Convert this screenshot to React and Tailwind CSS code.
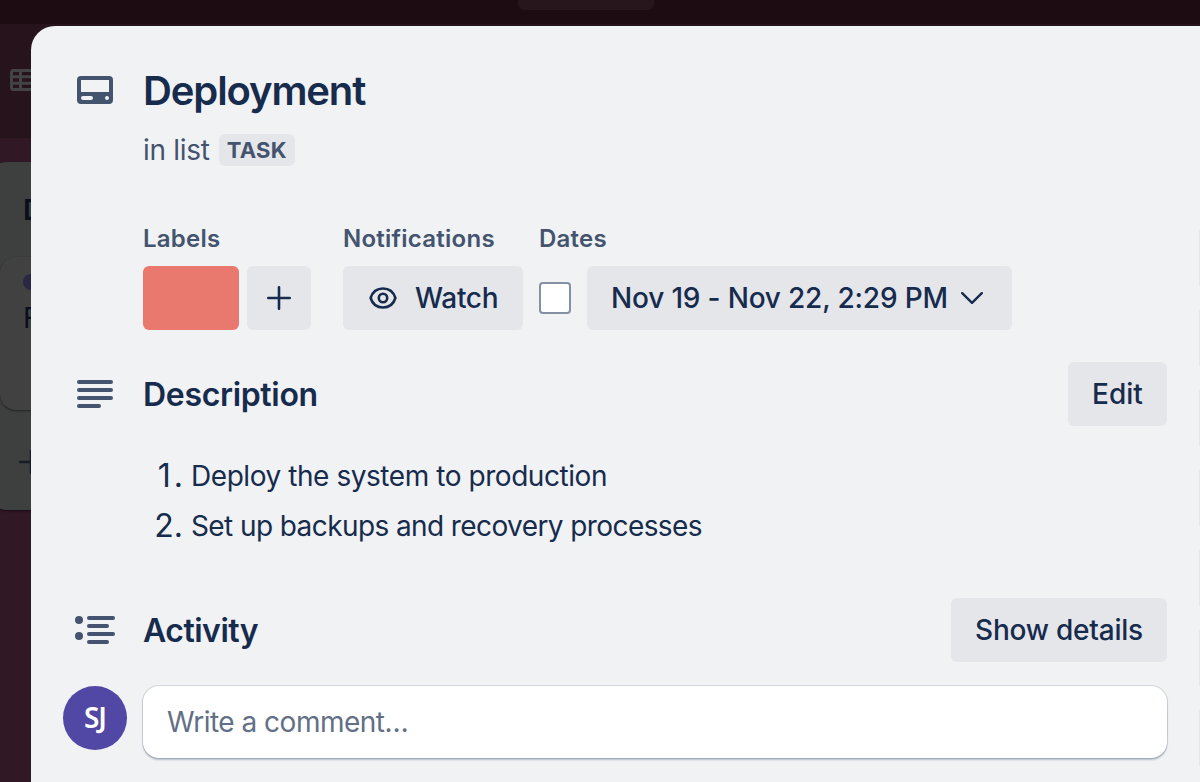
function CardIcon() {
  return (
    <svg className="-mt-[2px] h-[28px] w-[36px]" viewBox="0 0 36 28" fill="none">
      <path
        fillRule="evenodd"
        clipRule="evenodd"
        fill="#44546f"
        d="M4 0h28a4 4 0 0 1 4 4v20a4 4 0 0 1-4 4H4a4 4 0 0 1-4-4V4a4 4 0 0 1 4-4ZM4 4v12h28V4ZM6 20a2 2 0 0 0 0 4h8a2 2 0 0 0 0-4ZM30 20a2 2 0 1 0 0 4a2 2 0 1 0 0-4Z"
      />
    </svg>
  );
}

function DescriptionIcon() {
  return (
    <svg className="h-[28px] w-[36px]" viewBox="0 0 36 28" fill="#44546f">
      <rect x="0" y="0" width="36" height="4" rx="2" />
      <rect x="0" y="8" width="36" height="4" rx="2" />
      <rect x="0" y="16" width="36" height="4" rx="2" />
      <rect x="0" y="24" width="24" height="4" rx="2" />
    </svg>
  );
}

function ActivityIcon() {
  return (
    <svg className="h-[28px] w-[40px]" viewBox="0 0 40 28" fill="#44546f">
      <circle cx="4" cy="4" r="4" />
      <circle cx="4" cy="20" r="4" />
      <rect x="12" y="0" width="28" height="4" rx="2" />
      <rect x="12" y="8" width="22" height="4" rx="2" />
      <rect x="12" y="16" width="28" height="4" rx="2" />
      <rect x="12" y="24" width="22" height="4" rx="2" />
    </svg>
  );
}

function EyeIcon() {
  return (
    <svg className="h-[24px] w-[28px] shrink-0" viewBox="0 0 28 24" fill="none" stroke="#172b4d" strokeWidth="2.6">
      <path d="M1.6 12C3.4 6.200 8 2.500 14 2.500S24.600 6.200 26.400 12C24.600 17.800 20 21.500 14 21.500S3.400 17.800 1.600 12Z" strokeLinejoin="round" />
      <circle cx="14" cy="12" r="4.200" />
    </svg>
  );
}

function Button({ className = "", children }) {
  return (
    <button className={"flex h-16 shrink-0 items-center rounded-[6px] bg-[#e4e6ea] text-[28px] font-medium whitespace-nowrap " + className}>
      {children}
    </button>
  );
}

function FieldTitle({ children }) {
  return <h3 className="h-10 text-[24px] leading-[26px] font-semibold tracking-[0.25px] text-[#44546f]">{children}</h3>;
}

function Board() {
  return (
    <div className="flex h-[782px] w-full flex-col bg-[#301824]">
      <header className="flex h-6 shrink-0 items-start bg-[#1e0c13] pl-[518px]">
        <div className="h-[10px] w-[136px] rounded-b-[6px] bg-[#27171d]" />
      </header>
      <nav className="flex h-[114px] shrink-0 items-start bg-[#27131b] pt-[45px] pl-[10px]">
        <svg className="h-[22px] w-[34px]" viewBox="0 0 34 22" fill="none" stroke="#414345" strokeWidth="3">
          <rect x="1.500" y="1.500" width="31" height="19" rx="2" />
          <path d="M10.500 1v20M1 7.800h32M1 14.200h32" />
        </svg>
      </nav>
      <main className="pt-6">
        <section className="-ml-4 flex h-[348px] w-[316px] flex-col rounded-[24px] bg-[#3e403f] px-4 shadow-[0_1px_2px_#1a0c14]">
          <h2 className="flex h-[95px] items-center pl-[23px] text-[28px] font-semibold text-[#080f1b]">Done</h2>
          <article className="h-[153px] rounded-[16px] bg-[#414141] pt-[17px] shadow-[0_1px_2px_#222222]">
            <div className="ml-[23px] h-4 w-20 rounded-full bg-[#2a2742]" />
            <p className="pt-2 pl-[23px] text-[28px] leading-10 text-[#080f1b]">Finish</p>
          </article>
          <div className="flex grow items-center pt-1 pl-[19px]">
            <svg className="h-6 w-6" viewBox="0 0 24 24" stroke="#171d26" strokeWidth="2.500" strokeLinecap="round">
              <path d="M1 12h22M12 1v22" />
            </svg>
          </div>
        </section>
      </main>
    </div>
  );
}

const sideSlots = [0, 1, 2, 3, 4, 5, 6];

export default function App() {
  return (
    <div className="relative h-[782px] w-[1200px] overflow-hidden font-['Inter',sans-serif] text-[#172b4d]">
      <Board />
      <div className="absolute top-[26px] left-[31px] flex h-[756px] w-[1169px] overflow-hidden rounded-tl-[24px] bg-[#f0f2f4]">
        <div className="w-[1168px] shrink-0 pt-9 pr-8 pl-8">
          <div className="flex h-[58px] items-center">
            <div className="flex w-20 pl-[14px]"><CardIcon /></div>
            <h1 className="text-[40px] font-semibold tracking-[-0.028em]">Deployment</h1>
          </div>
          <div className="ml-20 flex h-[60px] items-center gap-[9px] text-[28px] text-[#44546f]">
            <span className="tracking-[-0.01em]">in list</span>
            <span className="flex h-8 w-[76px] items-center justify-center rounded-[6px] bg-[#e4e6ea] text-[22px] font-bold tracking-[0.2px]">TASK</span>
          </div>

          <div className="mt-[46px] ml-20 flex">
            <div className="mr-8">
              <FieldTitle>Labels</FieldTitle>
              <div className="flex gap-2">
                <div className="h-16 w-24 rounded-[6px] bg-[#e9796e]" />
                <Button className="w-16 justify-center">
                  <svg className="h-6 w-6" viewBox="0 0 24 24" stroke="#172b4d" strokeWidth="2.600" strokeLinecap="round">
                    <path d="M1.300 12h21.400M12 1.300v21.400" />
                  </svg>
                </Button>
              </div>
            </div>
            <div className="mr-4">
              <FieldTitle>Notifications</FieldTitle>
              <Button className="w-[180px] gap-[18px] pl-[26px]">
                <EyeIcon />
                <span className="tracking-[-0.3px]">Watch</span>
              </Button>
            </div>
            <div>
              <FieldTitle>Dates</FieldTitle>
              <div className="flex items-center gap-4">
                <div className="h-8 w-8 rounded-[4px] border-2 border-[#8590a2] bg-white" />
                <Button className="w-[425px] gap-[13px] pl-6">
                  <span className="tracking-[-0.18px]">Nov 19 - Nov 22, 2:29 PM</span>
                  <svg className="h-3 w-[22px]" viewBox="0 0 22 12" fill="none" stroke="#172b4d" strokeWidth="2.400" strokeLinecap="round" strokeLinejoin="round">
                    <path d="M1.200 1.200L11 10.800L20.800 1.200" />
                  </svg>
                </Button>
              </div>
            </div>
          </div>

          <div className="mt-8 flex h-16 items-center">
            <div className="flex w-20 pl-[14px]"><DescriptionIcon /></div>
            <h2 className="grow pt-[2px] text-[32px] font-semibold tracking-[-0.01em]">Description</h2>
            <Button className="w-[99px] justify-center">Edit</Button>
          </div>
          <ol className="mt-[25px] ml-20 text-[28px] leading-[50px]">
            <li className="flex gap-[8px]">
              <span className="w-10 text-right text-[32px]"><span className="tracking-[3px]">1</span>.</span>
              <span className="tracking-[-0.44px]">Deploy the system to production</span>
            </li>
            <li className="flex gap-[8px]">
              <span className="w-10 text-right text-[32px]">2.</span>
              <span className="tracking-[-0.59px]">Set up backups and recovery processes</span>
            </li>
          </ol>

          <div className="mt-[47px] flex h-16 items-center">
            <div className="flex w-20 pl-3"><ActivityIcon /></div>
            <h2 className="grow pt-[2px] text-[32px] font-semibold tracking-[-0.5px]">Activity</h2>
            <Button className="w-[216px] justify-center tracking-[-0.22px]">Show details</Button>
          </div>
          <div className="mt-6 flex items-start gap-4">
            <div className="flex h-16 w-16 items-center justify-center rounded-full bg-[#5147a5] pb-[2px] font-['Noto_Sans',sans-serif] text-[28px] font-semibold tracking-[-1px] text-white">SJ</div>
            <div className="flex h-[72px] grow items-center rounded-[16px] bg-white pl-6 text-[28px] tracking-[-0.5px] text-[#626f86] shadow-[0_0_0_1px_#091e4220,0_2px_2px_#091e4240]">Write a comment…</div>
          </div>
        </div>
        <aside className="flex w-[336px] shrink-0 flex-col gap-4 pt-[200px]">
          {sideSlots.map((slot) => (
            <div key={slot} className="h-16 w-[304px] shrink-0 rounded-[6px] bg-[#e4e6ea]" />
          ))}
        </aside>
      </div>
    </div>
  );
}
